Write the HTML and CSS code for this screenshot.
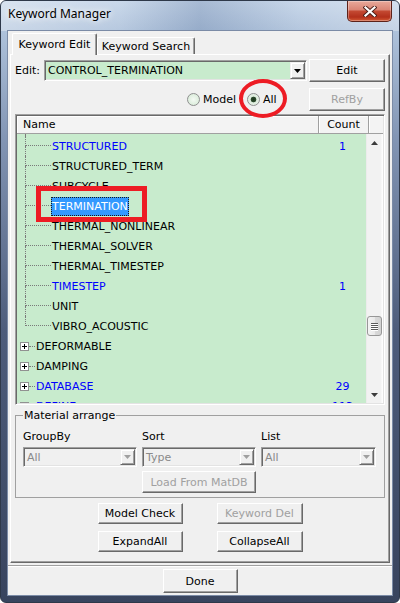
FILE: index.html
```html
<!DOCTYPE html>
<html lang="en">

<head>
     <meta charset="UTF-8">
     <meta name="viewport" content="width=device-width, initial-scale=1.0">
     <title>Keyword Manager</title>
     <link rel="stylesheet" href="styles.css">
</head>

<body>
     <div class="window">
          <div class="titlebar">
               <span class="title">Keyword Manager</span>
               <div class="close-btn">
                    <svg width="14" height="11" viewBox="0 0 14 11">
                         <path d="M2.5 1.5 L11.5 9.5 M11.5 1.5 L2.5 9.5" stroke="#4a1e18" stroke-width="4" stroke-linecap="square" />
                         <path d="M2.5 1.5 L11.5 9.5 M11.5 1.5 L2.5 9.5" stroke="#fff" stroke-width="2.2" stroke-linecap="square" />
                    </svg>
               </div>
          </div>

          <div class="client">
               <div class="tabs">
                    <div class="tab active">Keyword Edit</div>
                    <div class="tab other">Keyword Search</div>
               </div>

               <div class="panel">
                    <div class="edit-row">
                         <span class="lbl">Edit:</span>
                         <div class="combo green">
                              <span class="combo-text">CONTROL_TERMINATION</span>
                              <span class="drop"><svg width="7" height="4" viewBox="0 0 7 4"><path d="M0 0 H7 L3.5 4 Z" fill="#000" /></svg></span>
                         </div>
                         <button class="btn side">Edit</button>
                    </div>

                    <div class="radio-row">
                         <label class="radio"><span class="dot"></span>Model</label>
                         <label class="radio on"><span class="dot"></span>All<span class="ring"></span></label>
                         <button class="btn side" disabled>RefBy</button>
                    </div>

                    <div class="listview">
                         <div class="lv-head">
                              <div class="hcell name">Name</div>
                              <div class="hcell count">Count</div>
                              <div class="hcell filler"></div>
                         </div>
                         <div class="lv-body">
                              <div class="tree">
                                   <div class="tree-top"></div>
                                   <div class="row child"><div class="nm"><span class="conn"><i></i><i></i></span><span class="txt blue">STRUCTURED</span></div><span class="cnt">1</span></div>
                                   <div class="row child"><div class="nm"><span class="conn"><i></i><i></i></span><span class="txt">STRUCTURED_TERM</span></div><span class="cnt"></span></div>
                                   <div class="row child"><div class="nm"><span class="conn"><i></i><i></i></span><span class="txt">SUBCYCLE</span></div><span class="cnt"></span></div>
                                   <div class="row child"><div class="nm"><span class="conn"><i></i><i></i></span><span class="txt sel">TERMINATION<span class="mark"></span></span></div><span class="cnt"></span></div>
                                   <div class="row child"><div class="nm"><span class="conn"><i></i><i></i></span><span class="txt">THERMAL_NONLINEAR</span></div><span class="cnt"></span></div>
                                   <div class="row child"><div class="nm"><span class="conn"><i></i><i></i></span><span class="txt">THERMAL_SOLVER</span></div><span class="cnt"></span></div>
                                   <div class="row child"><div class="nm"><span class="conn"><i></i><i></i></span><span class="txt">THERMAL_TIMESTEP</span></div><span class="cnt"></span></div>
                                   <div class="row child"><div class="nm"><span class="conn"><i></i><i></i></span><span class="txt blue">TIMESTEP</span></div><span class="cnt">1</span></div>
                                   <div class="row child"><div class="nm"><span class="conn"><i></i><i></i></span><span class="txt">UNIT</span></div><span class="cnt"></span></div>
                                   <div class="row child last"><div class="nm"><span class="conn"><i></i><i></i></span><span class="txt">VIBRO_ACOUSTIC</span></div><span class="cnt"></span></div>
                                   <div class="row root"><div class="nm"><span class="plus"></span><span class="hl"></span><span class="txt">DEFORMABLE</span></div><span class="cnt"></span></div>
                                   <div class="row root"><div class="nm"><span class="plus"></span><span class="hl"></span><span class="txt">DAMPING</span></div><span class="cnt"></span></div>
                                   <div class="row root"><div class="nm"><span class="plus"></span><span class="hl"></span><span class="txt blue">DATABASE</span></div><span class="cnt">29</span></div>
                                   <div class="row root"><div class="nm"><span class="plus"></span><span class="hl"></span><span class="txt blue">DEFINE</span></div><span class="cnt">113</span></div>
                              </div>
                              <div class="vscroll">
                                   <div class="sb-btn"><svg width="7" height="4" viewBox="0 0 7 4"><path d="M3.5 0 L7 4 H0 Z" fill="#3c3c3c" /></svg></div>
                                   <div class="sb-track">
                                        <div class="sb-thumb"><i></i><i></i><i></i><i></i></div>
                                   </div>
                                   <div class="sb-btn"><svg width="7" height="4" viewBox="0 0 7 4"><path d="M0 0 H7 L3.5 4 Z" fill="#3c3c3c" /></svg></div>
                              </div>
                         </div>
                    </div>

                    <fieldset class="group">
                         <legend>Material arrange</legend>
                         <div class="group-grid">
                              <span class="glbl">GroupBy</span>
                              <span class="glbl">Sort</span>
                              <span class="glbl">List</span>
                              <div class="combo off"><span class="combo-text">All</span><span class="drop"><svg width="7" height="4" viewBox="0 0 7 4"><path d="M0 0 H7 L3.5 4 Z" fill="#a0a0a0" /></svg></span></div>
                              <div class="combo off"><span class="combo-text">Type</span><span class="drop"><svg width="7" height="4" viewBox="0 0 7 4"><path d="M0 0 H7 L3.5 4 Z" fill="#a0a0a0" /></svg></span></div>
                              <div class="combo off"><span class="combo-text">All</span><span class="drop"><svg width="7" height="4" viewBox="0 0 7 4"><path d="M0 0 H7 L3.5 4 Z" fill="#a0a0a0" /></svg></span></div>
                              <button class="btn load" disabled>Load From MatDB</button>
                         </div>
                    </fieldset>

                    <div class="actions">
                         <button class="btn">Model Check</button>
                         <button class="btn" disabled>Keyword Del</button>
                         <button class="btn">ExpandAll</button>
                         <button class="btn">CollapseAll</button>
                    </div>
               </div>

               <div class="footer">
                    <button class="btn done">Done</button>
               </div>
          </div>
     </div>
</body>

</html>
```

FILE: styles.css
```css
* {
     padding: 0;
     margin: 0;
     box-sizing: border-box;
}

html,
body {
     width: 400px;
     height: 603px;
     overflow: hidden;
     background: #fff;
}

body {
     font-family: "DejaVu Sans", sans-serif;
     font-size: 11px;
     color: #000;
}

/* window frame */

.window {
     width: 400px;
     height: 603px;
     display: flex;
     flex-direction: column;
     border: 1px solid #2e3849;
     border-radius: 6px;
     background: linear-gradient(180deg, #c4d4e8 0, #aec2db 30px, #8194b3 140px, #4d5c7b 330px, #38445e 100%);
}

.titlebar {
     height: 30px;
     display: flex;
     align-items: flex-start;
     padding: 0 7px;
     border-radius: 5px 5px 0 0;
     background: linear-gradient(90deg, rgba(255, 255, 255, .35) 0, rgba(255, 255, 255, .1) 30%, rgba(40, 70, 120, .18) 50%, rgba(255, 255, 255, .08) 75%, rgba(255, 255, 255, .3) 100%);
}

.title {
     font-family: "Noto Sans", sans-serif;
     font-size: 12px;
     line-height: 16px;
     padding-top: 5px;
     text-shadow: 0 0 6px #fff, 0 0 10px rgba(255, 255, 255, .8);
}

.close-btn {
     margin-left: auto;
     width: 45px;
     height: 21px;
     display: flex;
     align-items: center;
     justify-content: center;
     border: 1px solid #5d2219;
     border-top: 0;
     border-radius: 0 0 5px 5px;
     background: linear-gradient(180deg, #e8a99b 0%, #d98474 45%, #c44a33 50%, #b3301b 80%, #d35a35 100%);
     box-shadow: inset 0 0 0 1px rgba(255, 255, 255, .3);
}

.client {
     flex: 1;
     margin: 0 7px 7px;
     background: #f0f0f0;
     display: flex;
     flex-direction: column;
     box-shadow: 0 0 0 1px #7b8ba6;
}

/* tabs */

.tabs {
     height: 23px;
     display: flex;
     align-items: flex-end;
     padding-left: 4px;
     position: relative;
     z-index: 1;
}

.tab {
     height: 17px;
     display: flex;
     align-items: center;
     justify-content: center;
     background: #f0f0f0;
     border: 1px solid;
     border-color: #fff #696969 transparent #fff;
     border-bottom: 0;
     border-radius: 2px 2px 0 0;
     box-shadow: inset -1px 0 #a0a0a0;
}

.tab.active {
     width: 85px;
     height: 22px;
     margin-bottom: -1px;
}

.tab.other {
     width: 98px;
}

.panel {
     height: 509px;
     margin: 0 2px;
     padding: 0 4px;
     border: 1px solid;
     border-color: #fff #696969 #696969 #fff;
     box-shadow: inset -1px -1px #a0a0a0;
}

/* buttons & combos */

.btn {
     font: inherit;
     color: #000;
     background: #f0f0f0;
     border: 1px solid;
     border-color: #fff #696969 #696969 #fff;
     box-shadow: inset -1px -1px #a0a0a0;
     display: flex;
     align-items: center;
     justify-content: center;
}

.btn:disabled {
     color: #a0a0a0;
}

.combo {
     display: flex;
     align-items: center;
     padding: 1px;
     border: 1px solid;
     border-color: #a0a0a0 #fff #fff #a0a0a0;
     box-shadow: inset 1px 1px #696969, inset -1px -1px #e3e3e3;
}

.combo-text {
     flex: 1;
     padding-left: 2px;
     white-space: nowrap;
}

.drop {
     width: 15px;
     align-self: stretch;
     display: flex;
     align-items: center;
     justify-content: center;
     background: #f0f0f0;
     border: 1px solid;
     border-color: #f0f0f0 #696969 #696969 #f0f0f0;
     box-shadow: inset 1px 1px #fff, inset -1px -1px #a0a0a0;
}

.combo.green {
     width: 263px;
     height: 21px;
     background: #c8ebcd;
}

.combo.off {
     height: 20px;
     background: #f0f0f0;
     color: #8a8a8a;
}

.edit-row {
     display: flex;
     align-items: center;
     height: 23px;
     margin-top: 4px;
}

.lbl {
     width: 29px;
}

.btn.side {
     width: 76px;
     height: 23px;
     margin-left: auto;
}

.radio-row {
     display: flex;
     align-items: center;
     height: 23px;
     margin-top: 6px;
}

.radio {
     display: flex;
     align-items: center;
     height: 13px;
     line-height: 13px;
     position: relative;
}

.radio:first-child {
     margin-left: 172px;
}

.radio+.radio {
     margin-left: 11px;
}

.dot {
     width: 13px;
     height: 13px;
     margin-right: 3px;
     border-radius: 50%;
     border: 1px solid #8e8f8f;
     background: radial-gradient(circle, #f4faf4 0, #d3e8d3 100%);
}

.radio.on .dot {
     background: radial-gradient(circle, #1c361c 0, #2c4a2c 2.5px, #dcebdc 3.2px, #eef5ee 100%);
}

.ring {
     position: absolute;
     left: -8px;
     top: -14px;
     width: 48px;
     height: 39px;
     border: 4px solid #ed1c24;
     border-radius: 50%;
}

/* list */

.listview {
     margin-top: 3px;
     height: 291px;
     padding: 1px;
     display: flex;
     flex-direction: column;
     border: 1px solid;
     border-color: #a0a0a0 #fff #fff #a0a0a0;
     box-shadow: inset 1px 1px #696969, inset -1px -1px #e3e3e3;
}

.lv-head {
     display: flex;
     height: 18px;
     background: #f3f3f3;
}

.hcell {
     display: flex;
     align-items: center;
     border-right: 1px solid #a0a0a0;
     border-bottom: 1px solid #a0a0a0;
     box-shadow: inset 1px 1px #fff;
}

.hcell.name {
     width: 302px;
     padding-left: 6px;
}

.hcell.count {
     width: 50px;
     justify-content: center;
}

.hcell.filler {
     flex: 1;
     border-right: 0;
}

.lv-body {
     flex: 1;
     min-height: 0;
     display: flex;
     overflow: hidden;
}

.tree {
     width: 349px;
     background: #c8ebcd;
     overflow: hidden;
}

.tree-top {
     height: 2px;
     margin-left: 8px;
     border-left: 1px dotted #7a7a7a;
}

.row {
     display: grid;
     grid-template-columns: 302px 47px;
     height: 20px;
}

.nm {
     display: flex;
     align-items: center;
     white-space: nowrap;
}

.child .nm {
     padding-left: 8px;
}

.conn {
     align-self: stretch;
     width: 26px;
     display: flex;
     flex-direction: column;
}

.conn i {
     flex: 1;
     border-left: 1px dotted #7a7a7a;
}

.conn i:first-child {
     flex: none;
     height: 10px;
     border-bottom: 1px dotted #7a7a7a;
}

.last .conn i:last-child {
     border-left: 0;
}

.root .nm {
     padding-left: 3px;
}

.plus {
     width: 9px;
     height: 9px;
     border: 1px solid #919191;
     background: linear-gradient(#000, #000) center / 5px 1px no-repeat, linear-gradient(#000, #000) center / 1px 5px no-repeat, #fff;
}

.hl {
     width: 6px;
     border-top: 1px dotted #7a7a7a;
}

.txt {
     padding: 0 1px;
     line-height: 17px;
}

.blue {
     color: #0000ff;
}

.sel {
     position: relative;
     background: #3399ff;
     color: #fff;
     border: 1px dotted #1a1a1a;
     padding: 0;
}

.mark {
     position: absolute;
     left: -16px;
     top: -12px;
     width: 111px;
     height: 36px;
     border: 5px solid #ed1c24;
}

.cnt {
     display: flex;
     align-items: center;
     justify-content: center;
     color: #0000ff;
}

.vscroll {
     width: 17px;
     display: flex;
     flex-direction: column;
     background: linear-gradient(90deg, #e6e6e6 0, #f2f2f2 1px, #f2f2f2 15px, #fdfdfd 16px);
}

.sb-btn {
     height: 17px;
     display: flex;
     align-items: center;
     justify-content: center;
}

.sb-track {
     flex: 1;
}

.sb-thumb {
     height: 20px;
     margin: 165px 1px 0;
     border: 1px solid #979797;
     border-radius: 3px;
     background: linear-gradient(90deg, #f4f4f4 0, #e9e9e9 50%, #dadada 51%, #d2d2d2 100%);
     display: flex;
     flex-direction: column;
     align-items: center;
     justify-content: center;
     gap: 1px;
}

.sb-thumb i {
     width: 7px;
     height: 1px;
     background: #5a5a5a;
     box-shadow: 0 1px #fff;
}

/* material group */

.group {
     margin-top: 4px;
     padding: 0 7px 4px;
     border: 1px solid #a0a0a0;
}

.group legend {
     padding: 0 1px;
     line-height: 13px;
}

.group-grid {
     display: grid;
     grid-template-columns: 114px 114px 115px;
     grid-template-rows: 14px 20px 23px;
     column-gap: 5px;
     row-gap: 3px;
     padding-top: 8px;
}

.glbl {
     line-height: 14px;
}

.btn.load {
     grid-column: 2;
     height: 22px;
     align-self: end;
}

.actions {
     display: grid;
     grid-template-columns: 85px 86px;
     column-gap: 34px;
     row-gap: 7px;
     justify-content: center;
     margin-top: 5px;
}

.actions .btn {
     height: 21px;
}

.footer {
     height: 32px;
     display: flex;
     justify-content: center;
     align-items: flex-start;
     padding-top: 6px;
     background: linear-gradient(#f0f0f0 2px, #a0a0a0 2px, #a0a0a0 3px, #fff 3px, #fff 4px, #f0f0f0 4px);
}

.btn.done {
     width: 75px;
     height: 24px;
}
```
